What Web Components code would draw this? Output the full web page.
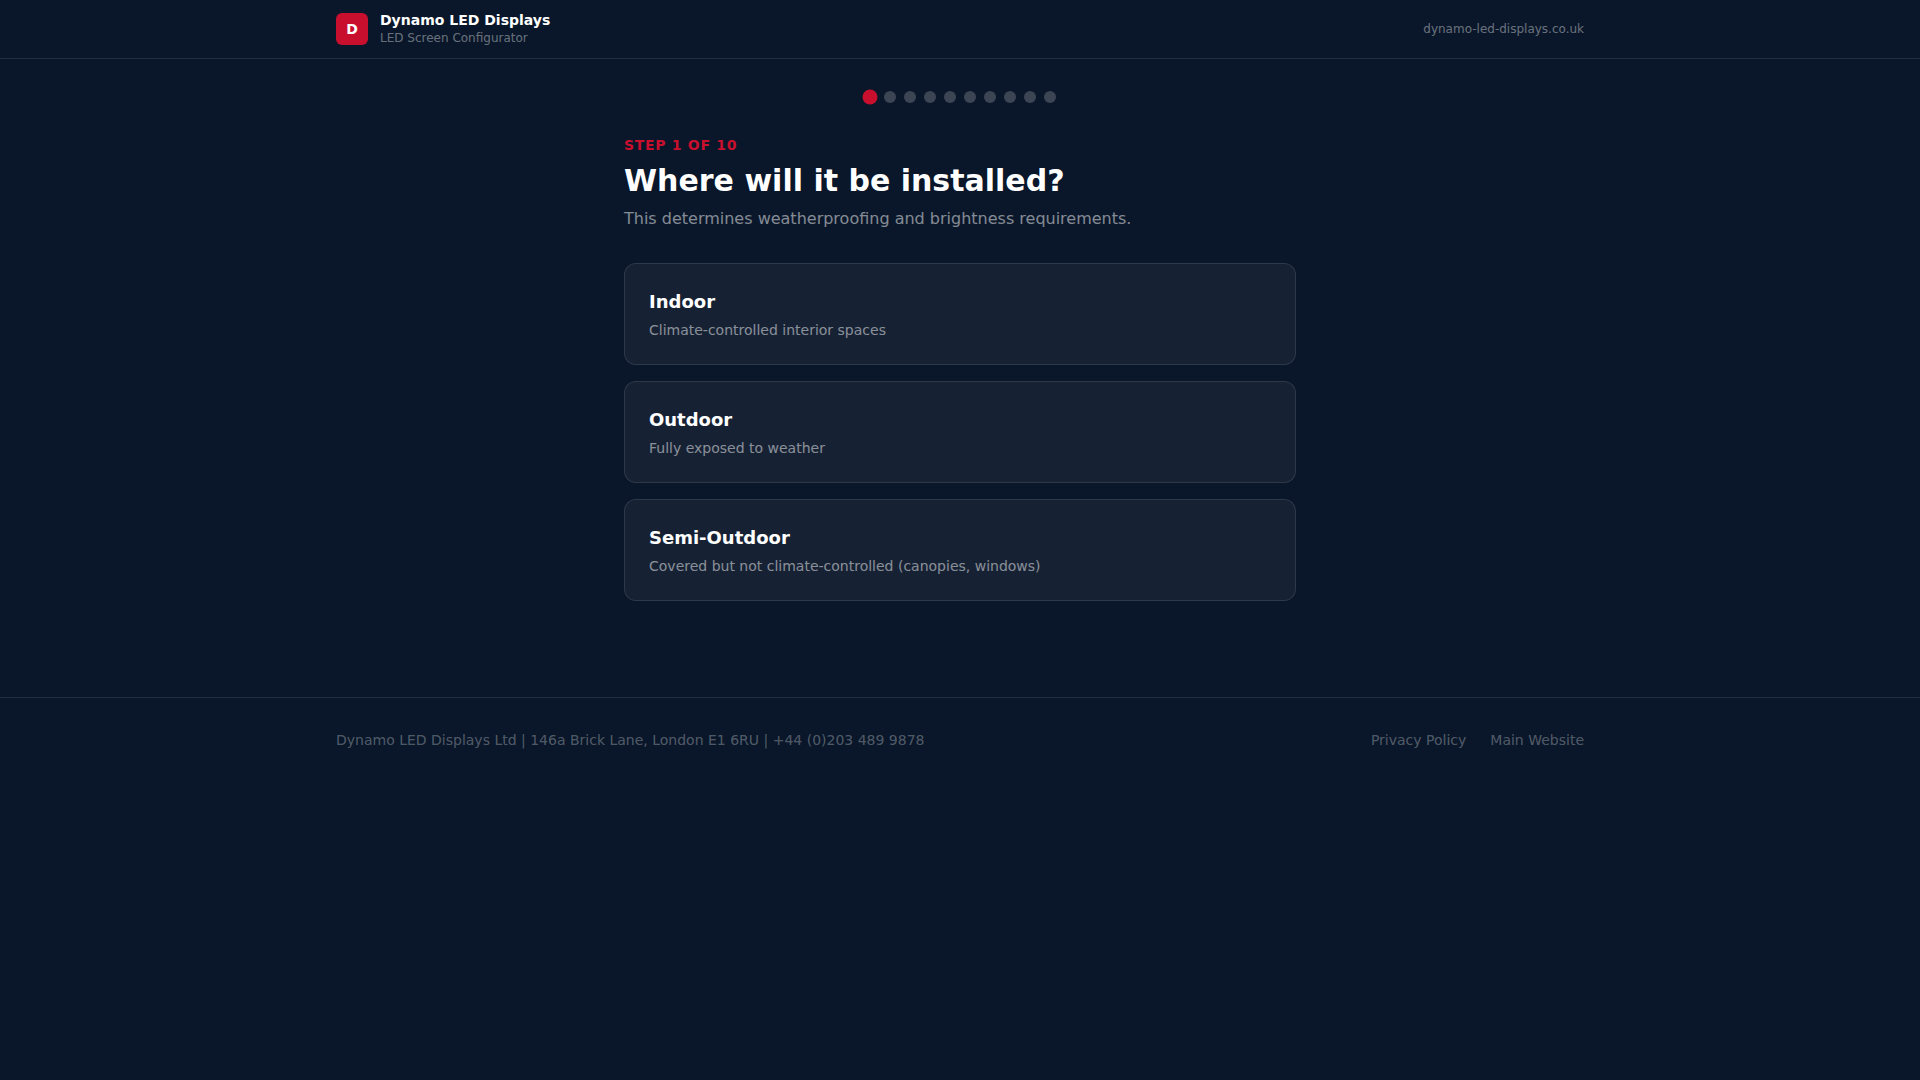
<!DOCTYPE html>
<html lang="en">
<head>
<meta charset="utf-8">
<title>Dynamo LED Displays - LED Screen Configurator</title>
<style>
  html, body { margin: 0; min-height: 100%; }
  body {
    min-height: 1080px;
    background: #0a172a;
    color: #fff;
    font-family: "DejaVu Sans", sans-serif;
  }
</style>
</head>
<body>
<site-header site="dynamo-led-displays.co.uk"></site-header>
<step-dots total="10" current="1"></step-dots>
<config-step step="1" total="10" heading="Where will it be installed?" intro="This determines weatherproofing and brightness requirements.">
  <option-card heading="Indoor">Climate-controlled interior spaces</option-card>
  <option-card heading="Outdoor">Fully exposed to weather</option-card>
  <option-card heading="Semi-Outdoor">Covered but not climate-controlled (canopies, windows)</option-card>
</config-step>
<site-footer>
  Dynamo LED Displays Ltd | 146a Brick Lane, London E1 6RU | +44 (0)203 489 9878
  <a slot="links" href="#">Privacy Policy</a>
  <a slot="links" href="#">Main Website</a>
</site-footer>

<script>
class SiteHeader extends HTMLElement {
  connectedCallback() {
    if (this.shadowRoot) return;
    this.attachShadow({mode: 'open'}).innerHTML = `
    <style>
      :host { display: block; border-bottom: 1px solid rgba(255,255,255,.1); }
      .inner {
        max-width: 1248px;
        height: 58px;
        margin: auto;
        display: flex;
        align-items: center;
        justify-content: space-between;
      }
      .brand { display: flex; align-items: center; gap: 12px; }
      .logo {
        width: 32px;
        height: 32px;
        border-radius: 6px;
        background: #c8102e;
        display: flex;
        align-items: center;
        justify-content: center;
        font-size: 14px;
        font-weight: bold;
      }
      .name { font-size: 14px; line-height: 18px; font-weight: bold; }
      .sub { font-size: 12px; line-height: 18px; color: rgba(255,255,255,.4); }
      .site { font-size: 12px; color: rgba(255,255,255,.4); }
    </style>
    <div class="inner">
      <div class="brand">
        <div class="logo">D</div>
        <div>
          <div class="name">Dynamo LED Displays</div>
          <div class="sub">LED Screen Configurator</div>
        </div>
      </div>
      <span class="site">${this.getAttribute('site')}</span>
    </div>`;
  }
}

class StepDots extends HTMLElement {
  connectedCallback() {
    if (this.shadowRoot) return;
    const total = Number(this.getAttribute('total'));
    const current = Number(this.getAttribute('current'));
    let dots = '';
    for (let i = 1; i <= total; i++) {
      dots += `<span class="dot${i === current ? ' active' : ''}"></span>`;
    }
    this.attachShadow({mode: 'open'}).innerHTML = `
    <style>
      :host { display: flex; justify-content: center; gap: 8px; padding-top: 32px; }
      .dot { width: 12px; height: 12px; border-radius: 50%; background: rgba(255,255,255,.2); }
      .active { background: #c8102e; transform: scale(1.25); }
    </style>
    ${dots}`;
  }
}

class ConfigStep extends HTMLElement {
  connectedCallback() {
    if (this.shadowRoot) return;
    this.attachShadow({mode: 'open'}).innerHTML = `
    <style>
      :host { display: block; width: 672px; margin: 32px auto 0; }
      .label {
        font-size: 14px;
        line-height: 20px;
        font-weight: bold;
        letter-spacing: 0.05em;
        text-transform: uppercase;
        color: #c8102e;
        margin-bottom: 8px;
      }
      h1 { margin: 0 0 8px; font-size: 30px; line-height: 36px; font-weight: bold; color: #fff; }
      p { margin: 0 0 32px; font-size: 16px; line-height: 24px; color: rgba(255,255,255,.5); }
      .options { display: flex; flex-direction: column; gap: 16px; }
    </style>
    <div class="label">Step ${this.getAttribute('step')} of ${this.getAttribute('total')}</div>
    <h1>${this.getAttribute('heading')}</h1>
    <p>${this.getAttribute('intro')}</p>
    <div class="options"><slot></slot></div>`;
  }
}

class OptionCard extends HTMLElement {
  connectedCallback() {
    if (this.shadowRoot) return;
    this.attachShadow({mode: 'open'}).innerHTML = `
    <style>
      :host {
        display: block;
        padding: 24px;
        background: rgba(255,255,255,.05);
        border: 1px solid rgba(255,255,255,.1);
        border-radius: 12px;
        font-size: 14px;
        line-height: 20px;
        color: rgba(255,255,255,.5);
        cursor: pointer;
      }
      .title { font-size: 18px; line-height: 28px; font-weight: bold; color: #fff; margin-bottom: 4px; }
    </style>
    <div class="title">${this.getAttribute('heading')}</div>
    <slot></slot>`;
  }
}

class SiteFooter extends HTMLElement {
  connectedCallback() {
    if (this.shadowRoot) return;
    this.attachShadow({mode: 'open'}).innerHTML = `
    <style>
      :host { display: block; margin-top: 96px; border-top: 1px solid rgba(255,255,255,.1); font-size: 14px; line-height: 20px; color: rgba(255,255,255,.3); }
      .inner { max-width: 1248px; margin: auto; padding: 32px 0; display: flex; justify-content: space-between; }
      .links { display: flex; gap: 24px; }
      ::slotted(a) { color: rgba(255,255,255,.3); text-decoration: none; }
    </style>
    <div class="inner">
      <div><slot></slot></div>
      <div class="links"><slot name="links"></slot></div>
    </div>`;
  }
}

customElements.define('site-header', SiteHeader);
customElements.define('step-dots', StepDots);
customElements.define('config-step', ConfigStep);
customElements.define('option-card', OptionCard);
customElements.define('site-footer', SiteFooter);
</script>
</body>
</html>
